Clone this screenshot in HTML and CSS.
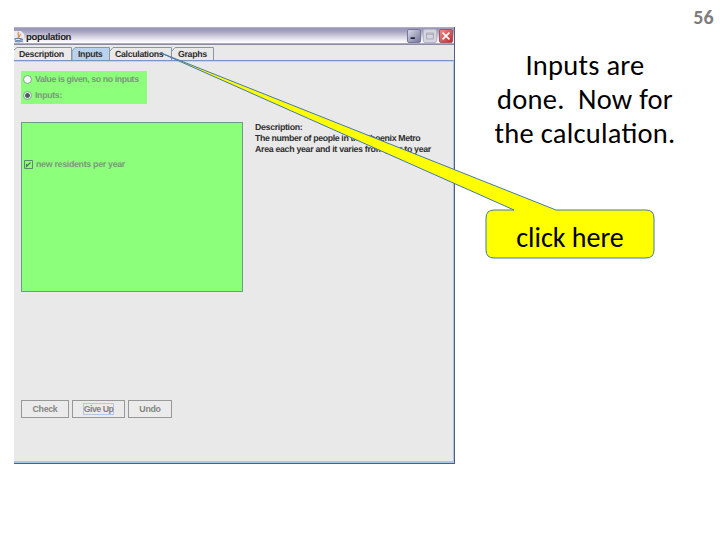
FILE: index.html
```html
<!DOCTYPE html>
<html lang="en">
<head>
<meta charset="utf-8">
<title>population</title>
<link rel="stylesheet" href="styles.css">
</head>
<body>
<main class="slide">
  <section class="window">
    <header class="titlebar">
      <svg class="java" viewBox="0 0 10 12" width="10" height="12"><path d="M0 0h7l3 3v9H0z" fill="#e9edf3"/><path d="M5 1C2 3 6 4 4 7M7 3C5 4 6 5 5 6" fill="none" stroke="#df8b50" stroke-width="1.2"/><path d="M1 7.500h6v1.500q-3 1.500-6 0zM7 8h1.500v1H7M1 10.500q4 1 8-.5" fill="none" stroke="#5b83ac"/></svg>
      <h1 class="title">population</h1>
      <div class="controls">
        <svg class="control min" viewBox="0 0 14 14"><path d="M3 9.500h5" stroke="#252542" stroke-width="2"/></svg>
        <svg class="control max" viewBox="0 0 14 14"><path d="M3 3.500h8v7H3zM3 5h8" fill="none" stroke="#a4a4b6"/></svg>
        <svg class="control close" viewBox="0 0 14 14"><path d="M3 3l8 8m0-8l-8 8" stroke="#fff" stroke-width="1.900"/></svg>
      </div>
    </header>
    <nav class="tabs">
      <svg class="tabshape" viewBox="0 0 441 14"><path d="M0 3L3 .5H57.500V13.500H0z" fill="#ebebeb"/><path d="M58 14V4L61 .5H95.500V14z" fill="#b9d3ee"/><path d="M0 3L3 .5H57.500V13M58 13V4L61 .5H95.500V13M96 4L99 .5H157.500V13M158 4L161 .5H199.500V13" fill="none" stroke="#8896a5"/></svg>
      <span class="tab t1">Description</span><span class="tab t2">Inputs</span><span class="tab t3">Calculations</span><span class="tab t4">Graphs</span>
    </nav>
    <div class="panel">
      <div class="choices">
        <div class="choice"><i class="radio"></i><span class="c1">Value is given, so no inputs</span></div>
        <div class="choice"><i class="radio on"></i><span>Inputs:</span></div>
      </div>
      <div class="columns">
        <div class="list">
          <svg class="check" viewBox="0 0 9 9" width="9" height="9"><path d="M.5 .5h8v8h-8z" fill="none" stroke="#648477"/><path d="M2.500 4v2.500L6.500 2.500" fill="none" stroke="#587565" stroke-width="1.300"/></svg>
          <span class="c3">new residents per year</span>
        </div>
        <p class="description"><span class="d0">Description:</span><br><span class="d1">The number of people in the Phoenix Metro</span><br><span class="d2">Area each year and it varies from year to year</span></p>
      </div>
      <div class="buttons">
        <button class="b1">Check</button><button class="b2"><span class="focus">Give Up</span></button><button class="b3">Undo</button>
      </div>
    </div>
  </section>
  <aside class="notes">
    <div class="page">56</div>
    <p class="message"><span class="m1">Inputs are</span><br><span class="m2">done.&nbsp; Now for</span><br><span class="m3">the calculation.</span></p>
  </aside>
  <div class="callout">
    <svg class="bubble" viewBox="0 0 720 540"><path d="M161 53L556 210H646Q654 210 654 218V250Q654 258 646 258H494Q486 258 486 250V218Q486 210 494 210H514Z" fill="#ff0" stroke="#4478ad" stroke-width="1"/></svg>
    <span class="click">click here</span>
  </div>
</main>
</body>
</html>
```
FILE: styles.css
```css
* { box-sizing: border-box; }
body { margin: 0; background: #fff; }
.slide { position: relative; display: flex; width: 720px; height: 540px; overflow: hidden; }
.window {
  display: flex; flex-direction: column;
  width: 441px; height: 437px; margin: 27px 0 0 14px;
  background: #e9e9e9; border-right: 1px solid #565b83; border-bottom: 1px solid #565b83;
  font: bold 8.8px/11px "Liberation Sans", Arial, sans-serif; color: #303030;
  letter-spacing: -.33px; text-rendering: geometricPrecision;
}
.titlebar {
  display: flex; align-items: center; height: 18px; flex: none; padding-right: 1px;
  background: linear-gradient(#b8b5cc 0, #9894b6 10%, #aaa7c4 28%, #d5d4e1 55%, #f7f7fa 80%, #fff 88%, #8f8ba4 93%, #8f8ba4 100%);
}
.java { display: block; margin-top: 1px; }
.title { margin: 2px 0 0 2px; font: bold 9.5px/11px "Liberation Sans", Arial, sans-serif; letter-spacing: -.35px; color: #222; }
.controls { display: flex; gap: 2px; margin-left: auto; }
.control { width: 14px; height: 14px; border: 1px solid #77769c; border-radius: 2px; }
.min { background: linear-gradient(135deg, #d9d9e9, #777699); }
.max { background: #d5d5df; border-color: #b7b7c8; }
.close { background: linear-gradient(135deg, #e79088, #c52b32); border-color: #aa5260; }
.tabs { position: relative; display: flex; align-items: center; height: 15px; flex: none; padding-top: 3px; }
.tabshape { position: absolute; left: 0; top: 2px; width: 441px; height: 14px; }
.tab { position: relative; white-space: nowrap; }
.t1 { width: 58px; padding-left: 5px; }
.t2 { width: 38px; padding-left: 6px; }
.t3 { width: 62px; padding-left: 5px; }
.t4 { padding-left: 6px; }
.panel { position: relative; flex: 1; padding: 9px 0 0 7px; border-top: 1px solid #7a96c0; border-right: 1px solid #abc7e6; border-bottom: 2px solid #abc7e6; box-shadow: inset 0 1px #bdd5ef; }
.choices { width: 126px; height: 33px; margin-top: 1px; background: #8cff7b; color: #7c997c; }
.choice { display: flex; align-items: center; height: 16px; padding-left: 2px; gap: 3px; white-space: nowrap; }
.radio { width: 9px; height: 9px; flex: none; border: 1px solid #8d9c98; border-radius: 50%; background: #effbef; }
.radio.on { background: radial-gradient(circle, #456060 0 2px, #e4f5e8 2.800px); }
.c1 { letter-spacing: -.42px; }
.columns { display: flex; gap: 12px; margin-top: 18px; }
.list { display: flex; align-items: flex-start; width: 222px; height: 170px; padding: 36px 0 0 2px; gap: 3px; background: #8cff7b; border: 1px solid #6c9c87; color: #7c997c; }
.check { margin-top: 1px; }
.c3 { letter-spacing: -.29px; }
.description { margin: 0; white-space: nowrap; }
.d1 { letter-spacing: -.38px; }
.d2 { letter-spacing: -.31px; }
.buttons { display: flex; gap: 3px; margin-top: 108px; }
.buttons button { height: 18px; padding: 0; border: 1px solid #989898; background: #ebebeb; font: inherit; letter-spacing: -.3px; color: #858585; }
.buttons .b1 { width: 48px; }
.buttons .b2 { width: 53px; }
.buttons .b3 { width: 44px; }
.focus { display: inline-block; border: 1px solid #b4c7e2; line-height: 10px; letter-spacing: -.5px; }
.notes { flex: 1; font-family: Carlito, Lato, sans-serif; }
.page { padding: 8px 6px 0 0; text-align: right; font-weight: bold; font-size: 20px; line-height: 18px; letter-spacing: .3px; color: #7d7d7d; }
.message { width: 200px; margin: 23px 0 0 30px; text-align: center; font-size: 28.5px; line-height: 34px; letter-spacing: .25px; font-feature-settings: "liga" 1; color: #000; white-space: nowrap; }
.bubble { position: absolute; left: 0; top: 0; width: 720px; height: 540px; }
.click { position: absolute; left: 486px; top: 221px; width: 168px; text-align: center; font: 28px/34px Carlito, Lato, sans-serif; }
```
